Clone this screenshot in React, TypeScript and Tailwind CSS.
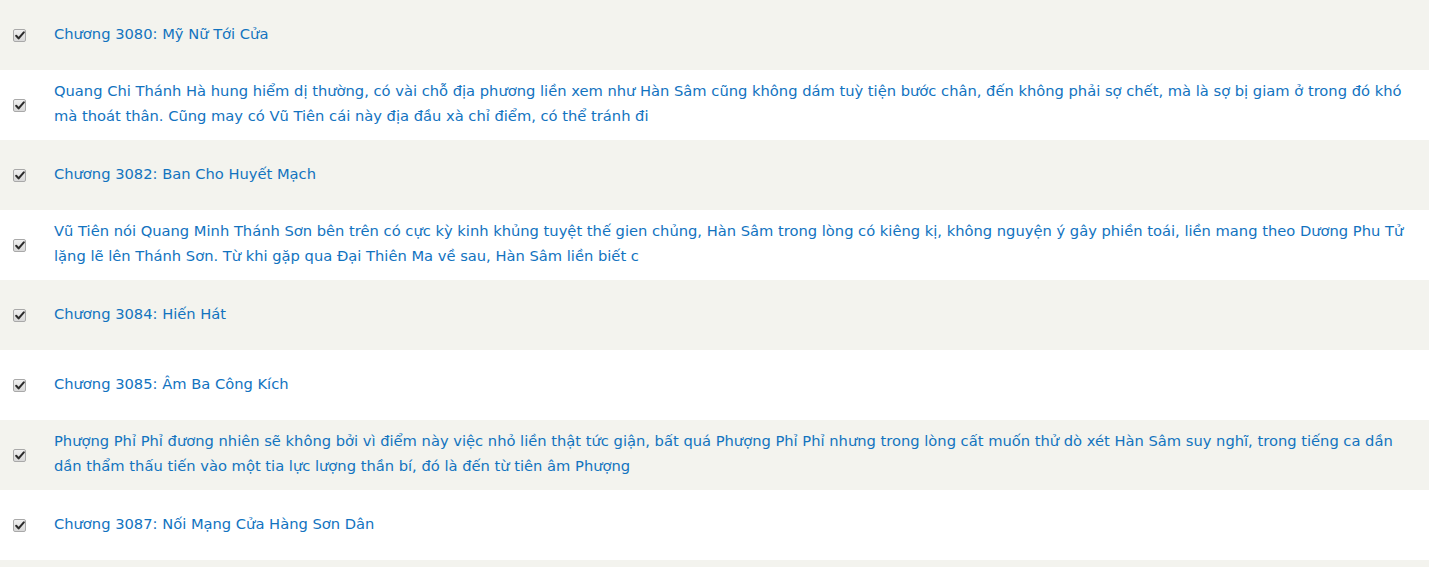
import React from "react";

const rows = [
  "Chương 3080: Mỹ Nữ Tới Cửa",
  "Quang Chi Thánh Hà hung hiểm dị thường, có vài chỗ địa phương liền xem như Hàn Sâm cũng không dám tuỳ tiện bước chân, đến không phải sợ chết, mà là sợ bị giam ở trong đó khó mà thoát thân. Cũng may có Vũ Tiên cái này địa đầu xà chỉ điểm, có thể tránh đi",
  "Chương 3082: Ban Cho Huyết Mạch",
  "Vũ Tiên nói Quang Minh Thánh Sơn bên trên có cực kỳ kinh khủng tuyệt thế gien chủng, Hàn Sâm trong lòng có kiêng kị, không nguyện ý gây phiền toái, liền mang theo Dương Phu Tử lặng lẽ lên Thánh Sơn. Từ khi gặp qua Đại Thiên Ma về sau, Hàn Sâm liền biết c",
  "Chương 3084: Hiến Hát",
  "Chương 3085: Âm Ba Công Kích",
  "Phượng Phỉ Phỉ đương nhiên sẽ không bởi vì điểm này việc nhỏ liền thật tức giận, bất quá Phượng Phỉ Phỉ nhưng trong lòng cất muốn thử dò xét Hàn Sâm suy nghĩ, trong tiếng ca dần dần thẩm thấu tiến vào một tia lực lượng thần bí, đó là đến từ tiên âm Phượng",
  "Chương 3087: Nối Mạng Cửa Hàng Sơn Dân",
  "",
];

function Check() {
  return (
    <div className="w-[13px] h-[13px] rounded-[2px] border border-[#a9a9a9] bg-gradient-to-b from-[#f0f0f0] to-[#d8d8d8] flex items-center justify-center">
      <svg width="10" height="9" viewBox="0 0 10 9">
        <path d="M1.2 4.8 L3.6 7.4 L8.8 1.4" fill="none" stroke="#2b2b2b" strokeWidth="2.1" strokeLinecap="round" strokeLinejoin="round" />
      </svg>
    </div>
  );
}

export default function App() {
  return (
    <div className="w-[1429px] h-[567px] overflow-hidden bg-white font-['DejaVu_Sans',Verdana,sans-serif]">
      {rows.map((t, i) => (
        <div key={i} className={`flex items-center h-[70px] ${i % 2 === 0 ? "bg-[#f3f3ee]" : "bg-white"}`}>
          {t && (
            <>
              <div className="w-[54px] shrink-0 pl-[13px] pt-[1px]">
                <Check />
              </div>
              <div className="flex-1 pr-[14px] pb-[4px] text-[14.7px] leading-[25px] text-[#1273bf]">{t}</div>
            </>
          )}
        </div>
      ))}
    </div>
  );
}
